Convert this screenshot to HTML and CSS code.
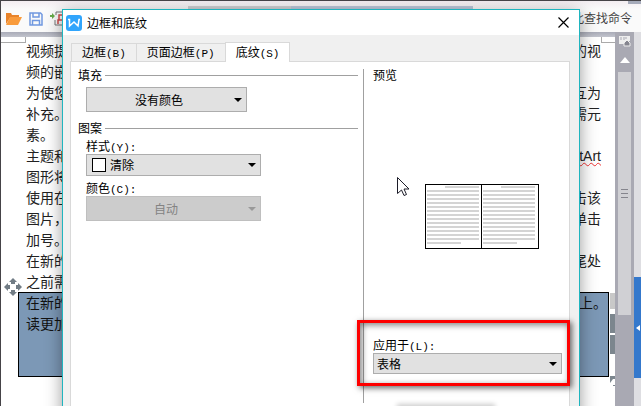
FILE: index.html
```html
<!DOCTYPE html>
<html lang="zh-CN">
<head>
    <meta charset="UTF-8">
    <meta name="viewport" content="width=device-width, initial-scale=1.0">
    <title>边框和底纹</title>
    <link rel="stylesheet" href="styles.css">
</head>
<body>
    <div class="app">
        <header class="toolbar">
            <button type="button" class="tool" aria-label="打开">
                <svg width="16" height="14" viewBox="0 0 16 14">
                    <path d="M0 12V1h5l1 2h7v3H4z" fill="#e8832a"/>
                    <path d="M0 13L4 5h12l-4 8z" fill="#f99b3c"/>
                </svg>
            </button>
            <button type="button" class="tool" aria-label="保存">
                <svg width="14" height="14" viewBox="0 0 14 14" fill="none" stroke="#7098e0" stroke-width="1.5">
                    <path d="M1 1h10.500l1.500 1.500V13H1z"/>
                    <path d="M4 1v4h6V1M3.500 13V8.500h7V13"/>
                </svg>
            </button>
            <button type="button" class="tool" aria-label="输出为PDF">
                <svg width="18" height="16" viewBox="0 0 18 16" fill="none">
                    <path d="M6 4V1h9l2 2v11H5V9" stroke="#777"/>
                    <path d="M0 4h2V2l3 3-3 3V6H0z" fill="#66aa4a"/>
                    <path d="M9 9V4h4v3M12 9H8v4" stroke="#d24b4b" stroke-width="1.500"/>
                </svg>
            </button>
            <span class="ribbon-strip"></span>
            <span class="find">此查找命令</span>
            <span class="corner"></span>
        </header>

        <div class="workspace">
            <main class="document">
                <div class="crop crop-left"></div>
                <div class="crop crop-right"></div>
                <div class="text">
                    <p><span>视频提</span><span>的视</span></p>
                    <p><span>频的嵌</span></p>
                    <p><span>为使您</span><span>互为</span></p>
                    <p><span>补充。</span><span>需元</span></p>
                    <p><span>素。</span></p>
                    <p><span>主题和</span><span class="misspelled">tArt</span></p>
                    <p><span>图形将</span></p>
                    <p><span>使用在</span><span>击该</span></p>
                    <p><span>图片，</span><span>单击</span></p>
                    <p><span>加号。</span></p>
                    <p><span>在新的</span><span>尾处</span></p>
                    <p><span>之前需</span></p>
                </div>
                <div class="doc-table">
                    <svg class="move-handle" width="18" height="18" viewBox="0 0 18 18" fill="#717c85">
                        <path d="M9 0l4 4h-2v2H7V4H5zM9 18l-4-4h2v-2h4v2h2zM0 9l4-4v2h2v4H4v2zM18 9l-4 4v-2h-2V7h2V5z"/>
                    </svg>
                    <p><span>在新的</span><span>上。</span></p>
                    <p><span>读更加</span></p>
                    <div class="table-tools">
                        <i class="tool-light"></i>
                        <i class="tool-dark"></i>
                        <i class="tool-dark"></i>
                        <svg width="5" height="10" viewBox="0 0 5 10" fill="#7c868e">
                            <path d="M0 0h5v3H3L0 7zM3 9h2v1H3z"/>
                        </svg>
                    </div>
                </div>
            </main>
            <div class="scrollbar">
                <svg width="12" height="11" viewBox="0 0 12 11">
                    <path d="M0 0h11v5H9L5 8H0z" fill="#eee"/>
                    <path d="M2 1v3M5 1v3M7 1v2" stroke="#a9a9b3"/>
                    <path d="M5 10V7l3-3 3 3v3z" fill="#85858f" stroke="#eee"/>
                </svg>
                <svg width="10" height="6" viewBox="0 0 10 6"><path d="M5 0l5 6H0z" fill="#fff"/></svg>
                <div class="thumb"><i></i><i></i><i></i></div>
            </div>
            <aside class="side">
                <button type="button" class="expand" aria-label="展开">
                    <svg width="4" height="6" viewBox="0 0 4 6"><path d="M4 0v6L0 3z" fill="#fff"/></svg>
                </button>
            </aside>
        </div>

        <section class="dialog" role="dialog" aria-labelledby="dialog-title">
            <div class="titlebar">
                <svg width="16" height="16" viewBox="0 0 16 16">
                    <rect width="16" height="16" rx="3" fill="#31a5fc"/>
                    <path d="M2 4.500h1.500V11L8 7l4 4 1-6.500h1" fill="none" stroke="#fff" stroke-width="1.500"/>
                </svg>
                <h1 id="dialog-title">边框和底纹</h1>
                <button type="button" class="close" aria-label="关闭">
                    <svg width="11" height="11" viewBox="0 0 11 11"><path d="M.5.500l10 10M10.500.500l-10 10" stroke="#000" stroke-width="1.200"/></svg>
                </button>
            </div>
            <div class="tabs" role="tablist">
                <button type="button" role="tab" class="tab">边框<span class="key">(B)</span></button>
                <button type="button" role="tab" class="tab">页面边框<span class="key">(P)</span></button>
                <button type="button" role="tab" class="tab active" aria-selected="true">底纹<span class="key">(S)</span></button>
            </div>
            <div class="panel">
                <div class="settings">
                    <h2>填充</h2>
                    <div class="combo combo-fill">
                        <select aria-label="填充"><option>没有颜色</option></select>
                    </div>
                    <h2 class="next">图案</h2>
                    <label for="pattern">样式<span class="key">(Y):</span></label>
                    <div class="combo combo-pattern">
                        <select id="pattern"><option>清除</option></select>
                        <i class="swatch"></i>
                    </div>
                    <label for="color">颜色<span class="key">(C):</span></label>
                    <div class="combo combo-color">
                        <select id="color" disabled><option>自动</option></select>
                    </div>
                </div>
                <div class="preview">
                    <h2>预览</h2>
                    <div class="sheet">
                        <div class="cell"></div>
                        <div class="cell"></div>
                    </div>
                    <div class="apply">
                        <label for="apply-to">应用于<span class="key">(L):</span></label>
                        <div class="combo combo-apply">
                            <select id="apply-to"><option>表格</option></select>
                        </div>
                        <div class="highlight"></div>
                    </div>
                </div>
            </div>
        </section>

        <div class="bottom-hint"></div>
        <svg class="cursor" width="13" height="20" viewBox="0 0 13 20">
            <path d="M.5.500v16l4-3.500 2.500 5.500 2.500-1-2.500-5.500h5z" fill="#fff" stroke="#1c1c28"/>
        </svg>
    </div>
</body>
</html>
```

FILE: styles.css
```css
* {
    box-sizing: border-box;
}
body {
    margin: 0;
    font-family: "Liberation Sans", "Noto Sans CJK SC", sans-serif;
    font-size: 12px;
    color: #000;
}
h1, h2, p {
    margin: 0;
    font-weight: normal;
}
svg {
    display: block;
    flex-shrink: 0;
}
button {
    padding: 0;
    border: none;
    background: none;
    font: inherit;
}
.app {
    position: relative;
    display: flex;
    flex-direction: column;
    height: 100vh;
    overflow: hidden;
    border-top: 1px solid #454347;
    border-left: 1px solid #454347;
}

/* toolbar */
.toolbar {
    position: relative;
    display: flex;
    align-items: center;
    gap: 7px;
    height: 31px;
    padding: 4px 9px 0 5px;
    background: linear-gradient(#f3edf1, #fafafa 8px);
}
.find {
    margin-left: auto;
    line-height: 16px;
    color: #444;
}
.ribbon-strip {
    position: absolute;
    top: 5px;
    left: 187px;
    right: 168px;
    height: 3px;
    background: linear-gradient(90deg, #d0d0d3 103px, #bdc8da 103px);
}
.corner {
    position: absolute;
    top: 0;
    right: 0;
    width: 13px;
    height: 3px;
    background: #a6abba;
}

/* document */
.workspace {
    display: flex;
    flex: 1;
    min-height: 0;
}
.document {
    position: relative;
    flex: 1;
    padding: 9px 6px 0 17px;
    background: linear-gradient(#a9abb7, #c2c4cd 5px, #fff 5px);
    font-size: 14px;
    line-height: 21px;
    color: #222;
}
.document p {
    display: flex;
    justify-content: space-between;
    height: 21px;
}
.text {
    margin-bottom: -1px;
    padding: 0 8px;
}
.crop {
    position: absolute;
    top: 5px;
    height: 6px;
    border-bottom: 1px solid #aaa;
}
.crop-left {
    left: 0;
    width: 25px;
    border-right: 1px solid #aaa;
}
.crop-right {
    right: 0;
    width: 14px;
    border-left: 1px solid #aaa;
}
.misspelled {
    text-decoration: underline wavy #e33 1px;
}
.doc-table {
    position: relative;
    height: 85px;
    padding: 0 1px 0 7px;
    border: 1px solid #000;
    background: #7c98b6;
    color: #111;
}
.move-handle {
    position: absolute;
    top: -15px;
    left: -15px;
}
.table-tools {
    position: absolute;
    top: 0;
    right: -7px;
    width: 5px;
}
.table-tools i {
    display: block;
}
.tool-light {
    height: 16px;
    margin-bottom: 5px;
    background: #c8c8c8;
}
.tool-dark {
    height: 19px;
    margin-bottom: 2px;
    background: #7c868e;
}
.table-tools svg {
    margin-top: 22px;
}
.scrollbar {
    display: flex;
    flex-direction: column;
    align-items: center;
    width: 19px;
    padding-top: 4px;
    background: #a9a9b3;
}
.scrollbar svg + svg {
    margin: 10px 0 9px;
}
.thumb {
    display: flex;
    flex-direction: column;
    justify-content: center;
    gap: 3px;
    width: 13px;
    height: 243px;
    padding: 0 3px;
    background: #d0d0d4;
}
.thumb i {
    height: 1px;
    background: #85858d;
}
.side {
    width: 7px;
    padding-top: 245px;
    background: #dedee2;
}
.expand {
    display: flex;
    align-items: center;
    justify-content: center;
    width: 100%;
    height: 101px;
    background: #3478cc;
}

/* dialog */
.dialog {
    position: absolute;
    top: 8px;
    left: 61px;
    right: 61px;
    bottom: -20px;
    display: flex;
    flex-direction: column;
    border: 1px solid #1fb5bf;
    background: #f0f0f0;
    box-shadow: 0 4px 16px rgba(0, 0, 0, 0.4);
    font-family: "Noto Sans CJK SC", sans-serif;
    line-height: 12px;
}
.key {
    font-family: "Liberation Mono", monospace;
    font-size: 11px;
}
.titlebar {
    display: flex;
    align-items: center;
    gap: 5px;
    height: 25px;
    padding: 0 10px 0 3px;
    background: #fff;
}
.titlebar h1 {
    font-size: 12px;
}
.close {
    margin-left: auto;
}
.tabs {
    display: flex;
    align-items: flex-end;
    height: 26px;
    padding-left: 8px;
}
.tab {
    height: 18px;
    padding: 0 10px;
    border: 1px solid #d9d9d9;
    border-bottom: none;
    border-right: none;
}
.tab.active {
    position: relative;
    height: 20px;
    margin-bottom: -1px;
    border-right: 1px solid #d9d9d9;
    background: #fff;
}
.panel {
    display: grid;
    grid-template-columns: 285px 1fr;
    flex: 1;
    margin: 0 9px 0 7px;
    padding: 7px 0 22px 7px;
    border: 1px solid #d9d9d9;
    border-bottom: none;
    background: #fff;
}
.panel h2 {
    display: flex;
    align-items: center;
    gap: 3px;
    font-size: 12px;
    line-height: 12px;
}
.panel label {
    display: block;
    height: 12px;
    line-height: 12px;
}
.settings {
    padding-right: 5px;
}
.settings h2::after {
    content: "";
    flex: 1;
    height: 1px;
    background: #a0a0a0;
}
.settings h2.next {
    margin: 10px 0 6px;
}
.settings label,
.settings .combo {
    margin-left: 8px;
}
.combo {
    position: relative;
    height: 22px;
    margin-top: 2px;
}
.combo::after {
    content: "";
    position: absolute;
    top: 50%;
    right: 5px;
    margin-top: -2px;
    border: 4px solid transparent;
    border-top-color: #000;
    border-bottom: none;
    pointer-events: none;
}
.combo select {
    appearance: none;
    display: block;
    width: 100%;
    height: 100%;
    margin: 0;
    padding: 0 18px 0 3px;
    border: 1px solid #adadad;
    border-radius: 0;
    background: #e1e1e1;
    font: inherit;
    color: #000;
}
.combo-fill {
    width: 161px;
    height: 25px;
    margin-top: 6px;
}
.combo-fill select,
.combo-color select {
    text-align-last: center;
}
.combo-pattern {
    width: 175px;
    margin-bottom: 6px;
}
.combo-pattern select {
    padding-left: 23px;
}
.swatch {
    position: absolute;
    top: 4px;
    left: 6px;
    width: 14px;
    height: 14px;
    border: 1px solid #000;
    background: #fff;
    pointer-events: none;
}
.combo-color {
    width: 175px;
    height: 25px;
}
.combo-color select {
    border-color: #bfbfbf;
    background: #ccc;
    color: #838383;
    opacity: 1;
}
.combo-color::after {
    border-top-color: #999;
}
.preview {
    padding: 0 7px 0 9px;
    border-left: 1px solid #a0a0a0;
}
.sheet {
    display: grid;
    grid-template-columns: 55px 1fr;
    width: 114px;
    height: 65px;
    margin: 103px 0 90px 52px;
    border: 1px solid #000;
}
.cell {
    padding: 1px;
}
.cell + .cell {
    border-left: 1px solid #000;
}
.cell::before {
    content: "";
    display: block;
    width: 52px;
    height: 59px;
    background:
        linear-gradient(#fff, #fff) 0 0 / 18px 2px no-repeat,
        linear-gradient(#fff, #fff) 34px 56px / 18px 3px no-repeat,
        repeating-linear-gradient(#d4d4d4 0 2px, #fff 2px 4px);
}
.apply {
    position: relative;
}
.combo-apply {
    height: 21px;
}
.highlight {
    position: absolute;
    top: -19px;
    right: -8px;
    bottom: -12px;
    left: -16px;
    border: 3px solid #fe0000;
    box-shadow: 2px 2px 6px rgba(0, 0, 0, 0.6), inset 2px 2px 6px rgba(0, 0, 0, 0.5);
    pointer-events: none;
}
.bottom-hint {
    position: absolute;
    bottom: -4px;
    left: 398px;
    width: 94px;
    height: 4px;
    box-shadow: 0 0 5px 2px rgba(0, 0, 0, 0.2);
}
.cursor {
    position: absolute;
    top: 176px;
    left: 396px;
}
```
